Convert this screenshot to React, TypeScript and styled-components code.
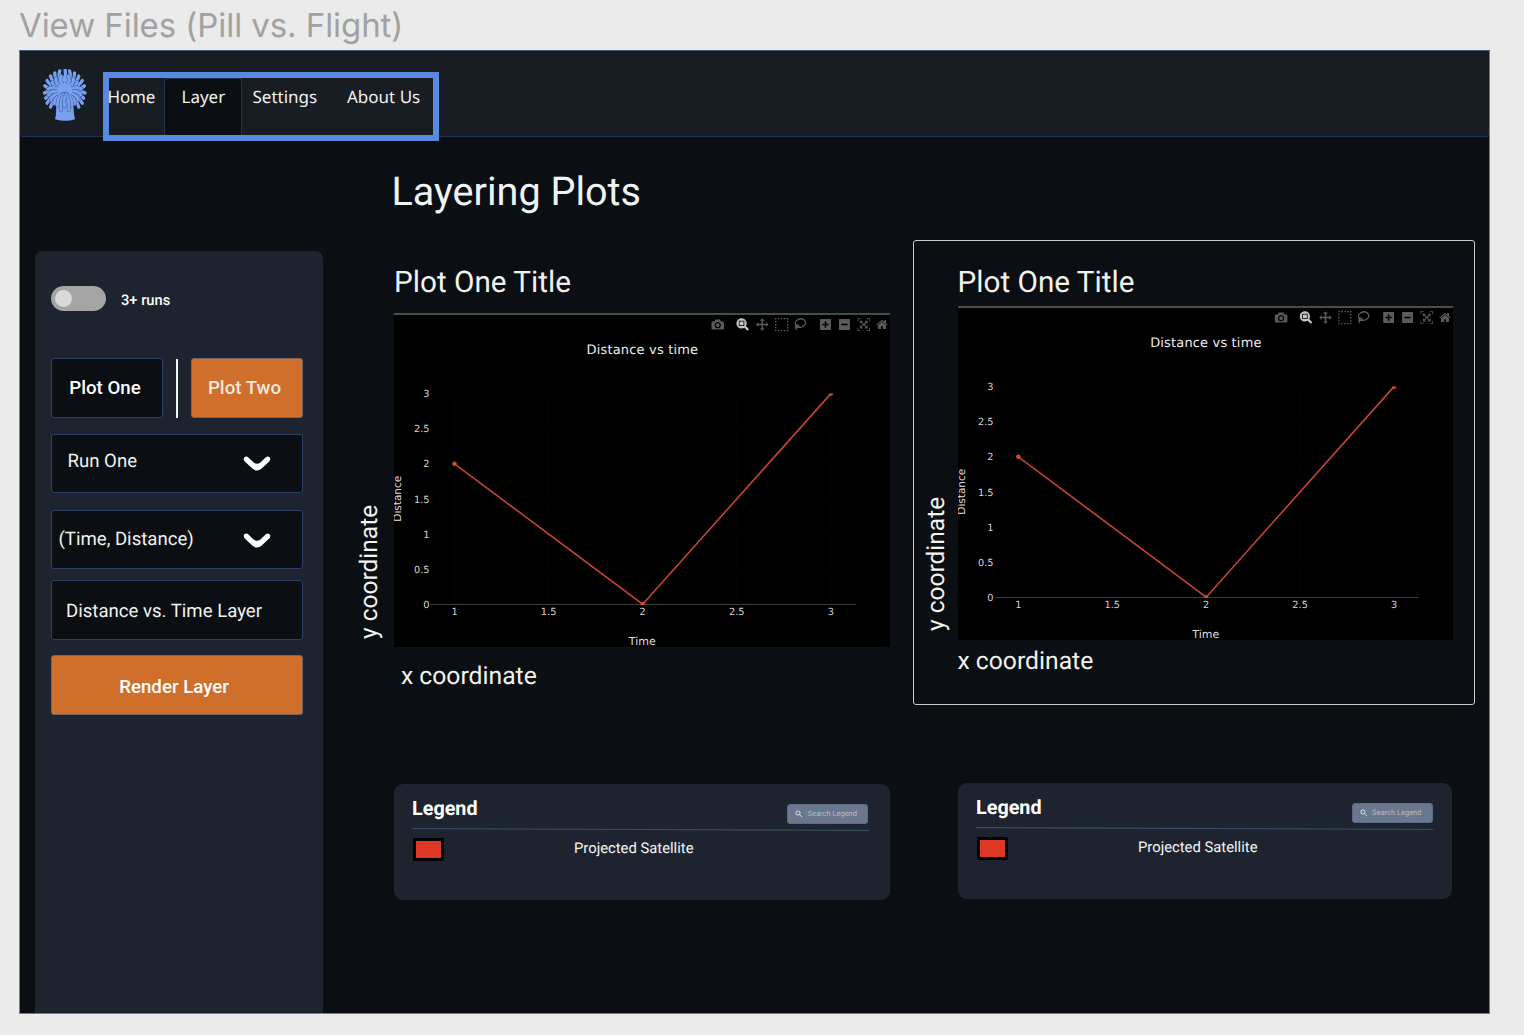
import React from "react";
import styled, { createGlobalStyle } from "styled-components";

const GlobalStyle = createGlobalStyle`
  * { box-sizing: border-box; }
  body {
    margin: 0;
    background: #ebebeb;
    overflow: hidden;
    font-family: Roboto, "Liberation Sans", sans-serif;
    text-rendering: geometricPrecision;
  }
  h1, h2, h3, p { margin: 0; font-weight: 400; }
  button { font: inherit; }
`;

const colors = {
  page: "#0b0e13",
  header: "#181c23",
  panel: "#1e242f",
  outline: "#2c4165",
  accent: "#588be0",
  orange: "#d06f2c",
  text: "#f2f2ee",
};

/* ---------- page shell ---------- */

const Canvas = styled.div`
  display: flex;
  flex-direction: column;
  width: 1524px;
  height: 1035px;
  padding-left: 19px;
`;

const FrameName = styled.p`
  height: 50px;
  font-family: Inter, "Liberation Sans", sans-serif;
  font-size: 33px;
  line-height: 51px;
  letter-spacing: -0.07px;
  color: #a2a2a2;
  white-space: nowrap;
`;

const Frame = styled.div`
  display: flex;
  flex-direction: column;
  width: 1471px;
  height: 964px;
  border: 1px solid #787c80;
  border-top-color: #3d5780;
  background: ${colors.page};
`;

const Header = styled.header`
  display: flex;
  align-items: flex-start;
  flex: none;
  height: 86px;
  padding-left: 22.5px;
  border-bottom: 1px solid #223652;
  border-radius: 0 0 3px 3px;
  background: ${colors.header};
`;

const LogoMark = styled.svg`
  width: 44px;
  height: 53px;
  margin-top: 18px;
`;

const Nav = styled.nav`
  display: flex;
  width: 336px;
  height: 69px;
  margin: 21px 0 0 16.5px;
  border: 6px solid ${colors.accent};
`;

const NavItem = styled.a<{ $width: number; $shift?: number; $gap?: number; $active?: boolean }>`
  flex: none;
  width: ${(p) => p.$width}px;
  padding-left: ${(p) => p.$shift ?? 0}px;
  border: ${(p) => (p.$active ? "1px solid #21344f" : "0")};
  border-bottom: 0;
  border-radius: 4px 4px 0 0;
  background: ${(p) => (p.$active ? colors.page : "transparent")};
  font-family: "Noto Sans", "Open Sans", sans-serif;
  font-size: 17px;
  line-height: ${(p) => (p.$active ? 35 : 37)}px;
  letter-spacing: ${(p) => p.$gap ?? 0}px;
  color: ${colors.text};
  white-space: nowrap;
`;

const NavText = styled.span<{ $pull?: number }>`
  margin-left: ${(p) => p.$pull ?? 0}px;
`;

const Body = styled.div`
  display: flex;
  flex: 1;
  min-height: 0;
`;

/* ---------- sidebar ---------- */

const Sidebar = styled.aside`
  display: flex;
  flex-direction: column;
  width: 288px;
  margin: 113.5px 0 0 14.5px;
  padding: 35.5px 20px 0 16.5px;
  border-radius: 8px 8px 0 0;
  background: ${colors.panel};
`;

const ToggleRow = styled.label`
  display: flex;
  align-items: center;
  gap: 15px;
  height: 25px;
  margin-bottom: 47px;
  font-size: 14.7px;
  font-weight: 500;
  color: #fff;
`;

const ToggleText = styled.span`
  padding-top: 3px;
`;

const Track = styled.span`
  display: flex;
  align-items: center;
  width: 55px;
  height: 25px;
  padding-left: 4px;
  border-radius: 13px;
  background: #a4a4a4;
`;

const Knob = styled.span`
  width: 17px;
  height: 17px;
  border-radius: 50%;
  background: #d9d9d9;
`;

const PlotSwitch = styled.div`
  display: flex;
  align-items: center;
  justify-content: space-between;
  margin-bottom: 16px;
`;

const SwitchRule = styled.span`
  width: 2px;
  height: 59px;
  background: #f4f4f4;
`;

const Button = styled.button<{ $primary?: boolean; $wide?: boolean }>`
  width: ${(p) => (p.$wide ? "252px" : "112px")};
  height: 60px;
  padding: ${(p) => (p.$wide ? "3px 6px 0 0" : "0 4px 0 0")};
  border: 1px solid ${(p) => (p.$primary ? "#75665f" : colors.outline)};
  border-radius: 3px;
  background: ${(p) => (p.$primary ? colors.orange : colors.page)};
  font-size: 18.7px;
  font-weight: 500;
  color: ${(p) => (p.$primary && !p.$wide ? "#f1e9df" : "#fff")};
`;

const Field = styled.div<{ $inset: number; $after: number; $lift?: number; $drop?: number; $tall?: boolean }>`
  display: flex;
  align-items: center;
  justify-content: space-between;
  width: 252px;
  height: ${(p) => (p.$tall ? 60 : 59)}px;
  margin-bottom: ${(p) => p.$after}px;
  padding: ${(p) => p.$drop ?? 0}px 31px ${(p) => p.$lift ?? 0}px ${(p) => p.$inset}px;
  border: 1px solid ${colors.outline};
  border-radius: 3px;
  background: ${colors.page};
  font-size: 18.6px;
  color: ${colors.text};
  white-space: nowrap;
`;

const ChevronIcon = styled.svg`
  width: 28px;
  height: 16px;
  margin-top: 5px;
`;

/* ---------- main area ---------- */

const Main = styled.main`
  width: 1136px;
  margin-left: 16.5px;
`;

const PageTitle = styled.h1`
  height: 103px;
  padding: 30px 0 0 52.5px;
  font-size: 39.6px;
  line-height: 50px;
  color: #edf4f5;
`;

const Columns = styled.div`
  display: grid;
  grid-template-columns: 574px 562px;
`;

const PlotPanel = styled.section<{ $selected?: boolean }>`
  height: 465px;
  border: 1px solid ${(p) => (p.$selected ? "#c9cacb" : "transparent")};
  border-radius: 3px;
`;

const PlotTitle = styled.h2<{ $inset: number; $height: number }>`
  height: ${(p) => p.$height}px;
  padding: 23px 0 0 ${(p) => p.$inset}px;
  font-size: 29.7px;
  line-height: 38px;
  color: ${colors.text};
`;

const PlotRow = styled.div`
  display: flex;
`;

const YLabel = styled.p<{ $width: number; $inset: number; $bottom: number }>`
  width: ${(p) => p.$width}px;
  height: 334px;
  padding-right: ${(p) => p.$inset}px;
  padding-top: ${(p) => p.$bottom}px;
  writing-mode: vertical-rl;
  transform: rotate(180deg);
  font-size: 24.5px;
  line-height: 30px;
  color: ${colors.text};
  white-space: nowrap;
`;

const XLabel = styled.p<{ $inset: number; $top: number }>`
  padding: ${(p) => p.$top}px 0 0 ${(p) => p.$inset}px;
  font-size: 24.7px;
  line-height: 30px;
  color: ${colors.text};
`;

const Chart = styled.svg<{ $width: number }>`
  display: block;
  flex: none;
  width: ${(p) => p.$width}px;
  height: 334px;
  background: #000;
  font-family: "DejaVu Sans", Verdana, sans-serif;
`;

/* ---------- legend ---------- */

const LegendCard = styled.section<{ $inset: number; $top: number; $width: number; $end: number }>`
  width: ${(p) => p.$width}px;
  height: 116px;
  margin: ${(p) => p.$top}px 0 0 ${(p) => p.$inset}px;
  padding: 13px ${(p) => p.$end}px 0 18px;
  border-radius: 9px;
  background: ${colors.panel};
`;

const LegendHead = styled.div`
  display: flex;
  justify-content: space-between;
  height: 31px;
`;

const LegendTitle = styled.h3`
  font-size: 19.8px;
  line-height: 23px;
  font-weight: 700;
  color: #fff;
`;

const Search = styled.div`
  display: flex;
  align-items: center;
  gap: 4.5px;
  width: 81px;
  height: 20px;
  margin-top: 7px;
  padding: 0 0 1px 7px;
  border: 1px solid #5d6c85;
  border-radius: 3px;
  background: #69778f;
  font-size: 7.5px;
  color: #b9bcbf;
  white-space: nowrap;
`;

const SearchIcon = styled.svg`
  width: 8px;
  height: 8px;
`;

const LegendRule = styled.svg`
  display: block;
  width: 457px;
  height: 3px;
`;

const LegendEntry = styled.div`
  display: flex;
  align-items: center;
  gap: 130px;
  margin-top: 7px;
  font-size: 14.8px;
  color: #f4f4f4;
`;

const Swatch = styled.span`
  width: 31px;
  height: 23px;
  margin-left: 1px;
  border: 3px solid #000;
  background: #dc3824;
`;

const EntryText = styled.span`
  padding-bottom: 4px;
`;

/* ---------- drawings ---------- */

type Strand = { a: number; r: number; bend: number; start: number };

const mirrored = (angles: number[], r: number, bend: number, start: number): Strand[] =>
  angles.flatMap((a) => [
    { a, r, bend, start },
    { a: 180 - a, r, bend: -bend, start },
  ]);

const backStrands: Strand[] = [
  ...mirrored([47, 33], 65, -7, 30),
  ...mirrored([19, 4], 61, -7, 30),
  ...mirrored([-11, -27, -43, -58, -73], 61, 8, 30),
  { a: -88, r: 64, bend: 2, start: 20 },
];

const frontStrands: Strand[] = [
  ...mirrored([-72, -50, -30], 45, 9, 22),
  ...mirrored([-10, 10, 30, 48], 50, -9, 20),
];

const locks = ["M61 74Q43 84 43 110", "M69 74Q88 84 87 110", "M63 76Q51 92 54 124", "M68 76Q81 92 77 124", "M65 82Q62 100 65 112"];

function strandPath({ a, r, bend, start }: Strand) {
  const t = (a * Math.PI) / 180;
  const ux = Math.cos(t);
  const uy = Math.sin(t);
  const mid = r * 0.72;
  const x = (k: number, n: number) => (65 + ux * k - uy * n).toFixed(1);
  const y = (k: number, n: number) => (65 + uy * k + ux * n).toFixed(1);
  return `M${x(start, 0)} ${y(start, 0)}Q${x(mid, bend)} ${y(mid, bend)} ${x(r, -bend * 0.4)} ${y(r, -bend * 0.4)}`;
}

function Logo() {
  const blue = "#77a1f0";
  const shade = "#35528a";
  const outlined = (paths: string[], w: number) =>
    paths.map((d) => (
      <g key={d} fill="none" strokeLinecap="round">
        <path d={d} stroke={shade} strokeWidth={w + 2.4} />
        <path d={d} stroke={blue} strokeWidth={w} />
      </g>
    ));
  return (
    <LogoMark viewBox="0 0 132 159">
      <path d="M39 112H92Q91 135 96 151Q67 160 36 151Q41 135 39 112Z" fill={blue} />
      <circle cx="65" cy="69" r="49" fill={blue} />
      <g fill="none" stroke={blue} strokeWidth="10" strokeLinecap="round">
        {backStrands.map((s) => (
          <path key={s.a} d={strandPath(s)} />
        ))}
      </g>
      {outlined(frontStrands.map(strandPath), 9)}
      <circle cx="65" cy="66" r="23" fill={blue} />
      {outlined(locks, 8.5)}
    </LogoMark>
  );
}

const Chevron = () => (
  <ChevronIcon viewBox="0 0 28 16">
    <path
      d="M1.2 1.6Q3.2 -0.4 5.4 1.6L10.6 6.4Q14 9.2 17.4 6.4L22.6 1.6Q24.8 -0.4 26.8 1.6Q28 3.4 26.2 5.4L18.4 12.8Q14 16.4 9.6 12.8L1.8 5.4Q0 3.4 1.2 1.6Z"
      fill="#fff"
    />
  </ChevronIcon>
);

const glyphs = {
  camera:
    "m500 450c-83 0-150-67-150-150 0-83 67-150 150-150 83 0 150 67 150 150 0 83-67 150-150 150z m400 150h-120c-16 0-34 13-39 29l-31 93c-6 15-23 28-40 28h-340c-16 0-34-13-39-28l-31-94c-6-15-23-28-40-28h-120c-55 0-100-45-100-100v-450c0-55 45-100 100-100h800c55 0 100 45 100 100v450c0 55-45 100-100 100z m-400-550c-138 0-250 112-250 250 0 138 112 250 250 250 138 0 250-112 250-250 0-138-112-250-250-250z m365 380c-19 0-35 16-35 35 0 19 16 35 35 35 19 0 35-16 35-35 0-19-16-35-35-35z",
  zoom: "m1000-25l-250 251c40 63 63 138 63 218 0 224-182 406-407 406-224 0-406-182-406-406s183-406 407-406c80 0 155 22 218 62l250-250 125 125z m-812 250l0 438 437 0 0-438-437 0z m62 375l313 0 0-312-313 0 0 312z",
  pan: "m1000 350l-187 188 0-125-250 0 0 250 125 0-188 187-187-187 125 0 0-250-250 0 0 125-188-188 186-187 0 125 252 0 0-250-125 0 187-188 188 188-125 0 0 250 250 0 0-126 187 188z",
  plus: "m1 787l0-875 875 0 0 875-875 0z m687-500l-187 0 0-187-125 0 0 187-188 0 0 125 188 0 0 187 125 0 0-187 187 0 0-125z",
  minus: "m0 788l0-876 876 0 0 876-876 0z m688-500l-500 0 0 125 500 0 0-125z",
  autoscale:
    "m250 850l-187 0-63 0 0-62 0-188 63 0 0 188 187 0 0 62z m688 0l-188 0 0-62 188 0 0-188 62 0 0 188 0 62-62 0z m-875-938l0 188-63 0 0-188 0-62 63 0 187 0 0 62-187 0z m875 188l0-188-188 0 0-62 188 0 62 0 0 62 0 188-62 0z m-125 188l-1 0-93-94-156 156 156 156 92-93 2 0 0 250-250 0 0-2 93-92-156-156-156 156 94 92 0 2-250 0 0-250 0 0 93 93 157-156-157-156-93 94 0 0 0-250 250 0 0 0-94 93 156 157 156-157-93-93 0 0 250 0 0 250z",
  home: "m786 296v-267q0-15-11-26t-25-10h-214v214h-143v-214h-214q-15 0-25 10t-11 26v267q0 1 0 2t0 2l321 264 321-264q1-1 1-4z m124 39l-34-41q-5-5-12-6h-2q-7 0-12 3l-386 322-386-322q-7-4-13-4-7 2-12 7l-35 41q-4 5-3 13t6 12l401 334q18 15 42 15t43-15l136-114v109q0 8 5 13t13 5h107q8 0 13-5t5-13v-227l122-102q5-5 6-12t-4-13z",
};

const tools: { glyph: keyof typeof glyphs; x: number; active?: boolean }[] = [
  { glyph: "camera", x: 317.5 },
  { glyph: "zoom", x: 342.5, active: true },
  { glyph: "pan", x: 362 },
  { glyph: "plus", x: 426 },
  { glyph: "minus", x: 445 },
  { glyph: "autoscale", x: 463.5 },
  { glyph: "home", x: 482.2 },
];

function ModeBar() {
  return (
    <g fill="#5b5b5b">
      {tools.map((t) => (
        <path
          key={t.glyph}
          d={glyphs[t.glyph]}
          fill={t.active ? "#c4c4c4" : undefined}
          transform={`translate(${t.x} 5.3) scale(0.0125) matrix(1 0 0 -1 0 850)`}
        />
      ))}
      <rect
        x="381.7"
        y="5.7"
        width="11.9"
        height="11.9"
        fill="none"
        stroke="#5e5e5e"
        strokeWidth="1.3"
        strokeDasharray="1.5 1.475"
        strokeDashoffset="0.75"
      />
      <g fill="none" stroke="#5b5b5b" strokeWidth="1.4">
        <ellipse cx="406.4" cy="10.1" rx="5.2" ry="4.2" transform="rotate(-14 406.4 10.1)" />
        <path d="M402.1 12.4Q404.4 11.4 405 13.4Q404 15 402.2 13.8M401.9 12.6Q401 14.8 402.8 16.8" />
      </g>
    </g>
  );
}

const xTicks = [1, 1.5, 2, 2.5, 3];
const yTicks = [0, 0.5, 1, 1.5, 2, 2.5, 3];
const series = [
  [1, 2],
  [2, 0],
  [3, 3],
];
const xPos = (v: number) => 60.5 + (v - 1) * 188.2;
const yPos = (v: number) => 291.2 - v * 70.2;

function DistanceChart({ id, width }: { id: string; width: number }) {
  return (
    <Chart viewBox="0 0 496 334" preserveAspectRatio="none" $width={width}>
      <defs>
        <clipPath id={id}>
          <rect x="30" y="80.5" width="432" height="211.5" />
        </clipPath>
      </defs>
      <rect width="496" height="2" fill="#4b4c4f" />
      <ModeBar />
      <text x="248.3" y="41" fontSize="13" textAnchor="middle" textLength="111.5" fill="#ececec">
        Distance vs time
      </text>
      <g stroke="#050505">
        {xTicks.map((v) => (
          <line key={v} x1={xPos(v)} x2={xPos(v)} y1="80" y2="291" />
        ))}
        {yTicks.map((v) => (
          <line key={v} x1="36" x2="462" y1={yPos(v)} y2={yPos(v)} />
        ))}
      </g>
      <line x1="37" x2="462" y1="291.5" y2="291.5" stroke="#3f3f3f" />
      <g fontSize="9.8" fill="#d6d6d6">
        {yTicks.map((v) => (
          <text key={v} x="35.6" y={yPos(v) + 3.6} textAnchor="end">
            {v}
          </text>
        ))}
        {xTicks.map((v) => (
          <text key={v} x={xPos(v)} y="302" textAnchor="middle">
            {v}
          </text>
        ))}
      </g>
      <text x="248.3" y="332.4" fontSize="11" textAnchor="middle" textLength="27" fill="#dedede">
        Time
      </text>
      <text transform="translate(7 185.7) rotate(-90)" fontSize="10.6" textAnchor="middle" textLength="46" fill="#dedede">
        Distance
      </text>
      <g clipPath={`url(#${id})`}>
        <polyline
          points={series.map(([x, y]) => `${xPos(x)},${yPos(y)}`).join(" ")}
          fill="none"
          stroke="#c6442e"
          strokeWidth="1.6"
        />
        {series.map(([x, y]) => (
          <circle key={x} cx={xPos(x)} cy={yPos(y)} r="2.3" fill="#d04a32" />
        ))}
      </g>
    </Chart>
  );
}

function Legend({ inset, top, width, end }: { inset: number; top: number; width: number; end: number }) {
  return (
    <LegendCard $inset={inset} $top={top} $width={width} $end={end}>
      <LegendHead>
        <LegendTitle>Legend</LegendTitle>
        <Search>
          <SearchIcon viewBox="0 0 8 8" fill="none" stroke="#e4e6e8" strokeWidth="0.9">
            <circle cx="3" cy="3" r="2.1" />
            <path d="M4.6 4.6L7.2 7.2" />
          </SearchIcon>
          Search Legend
        </Search>
      </LegendHead>
      <LegendRule viewBox="0 0 457 3">
        <path d="M0 0.6L457 2.4" stroke="#38536a" strokeWidth="1" />
      </LegendRule>
      <LegendEntry>
        <Swatch />
        <EntryText>Projected Satellite</EntryText>
      </LegendEntry>
    </LegendCard>
  );
}

export default function App() {
  return (
    <>
      <GlobalStyle />
      <Canvas>
        <FrameName>View Files (Pill vs. Flight)</FrameName>
        <Frame>
          <Header>
            <Logo />
            <Nav>
              <NavItem $width={55} $gap={-0.2}>
                <NavText $pull={-1.5}>Home</NavText>
              </NavItem>
              <NavItem $width={78} $shift={16.5} $active>
                Layer
              </NavItem>
              <NavItem $width={95} $shift={10.5}>
                Settings
              </NavItem>
              <NavItem $width={95} $shift={10}>
                About Us
              </NavItem>
            </Nav>
          </Header>
          <Body>
            <Sidebar>
              <ToggleRow>
                <Track>
                  <Knob />
                </Track>
                <ToggleText>3+ runs</ToggleText>
              </ToggleRow>
              <PlotSwitch>
                <Button>Plot One</Button>
                <SwitchRule />
                <Button $primary>Plot Two</Button>
              </PlotSwitch>
              <Field $inset={15.5} $after={17} $lift={5}>
                Run One
                <Chevron />
              </Field>
              <Field $inset={6.5} $after={11} $lift={2}>
                (Time, Distance)
                <Chevron />
              </Field>
              <Field $inset={14} $after={15} $drop={2} $tall>
                Distance vs. Time Layer
              </Field>
              <Button $primary $wide>
                Render Layer
              </Button>
            </Sidebar>
            <Main>
              <PageTitle>Layering Plots</PageTitle>
              <Columns>
                <PlotPanel>
                  <PlotTitle $inset={54} $height={72}>
                    Plot One Title
                  </PlotTitle>
                  <PlotRow>
                    <YLabel $width={54} $inset={14} $bottom={7.5}>
                      y coordinate
                    </YLabel>
                    <DistanceChart id="plot-one" width={496} />
                  </PlotRow>
                  <XLabel $inset={61} $top={15}>
                    x coordinate
                  </XLabel>
                </PlotPanel>
                <PlotPanel $selected>
                  <PlotTitle $inset={43.5} $height={65}>
                    Plot One Title
                  </PlotTitle>
                  <PlotRow>
                    <YLabel $width={44} $inset={7} $bottom={9}>
                      y coordinate
                    </YLabel>
                    <DistanceChart id="plot-two" width={495} />
                  </PlotRow>
                  <XLabel $inset={43.5} $top={7}>
                    x coordinate
                  </XLabel>
                </PlotPanel>
                <Legend inset={55} top={79} width={496} end={22} />
                <Legend inset={45} top={78} width={494} end={19.5} />
              </Columns>
            </Main>
          </Body>
        </Frame>
      </Canvas>
    </>
  );
}
